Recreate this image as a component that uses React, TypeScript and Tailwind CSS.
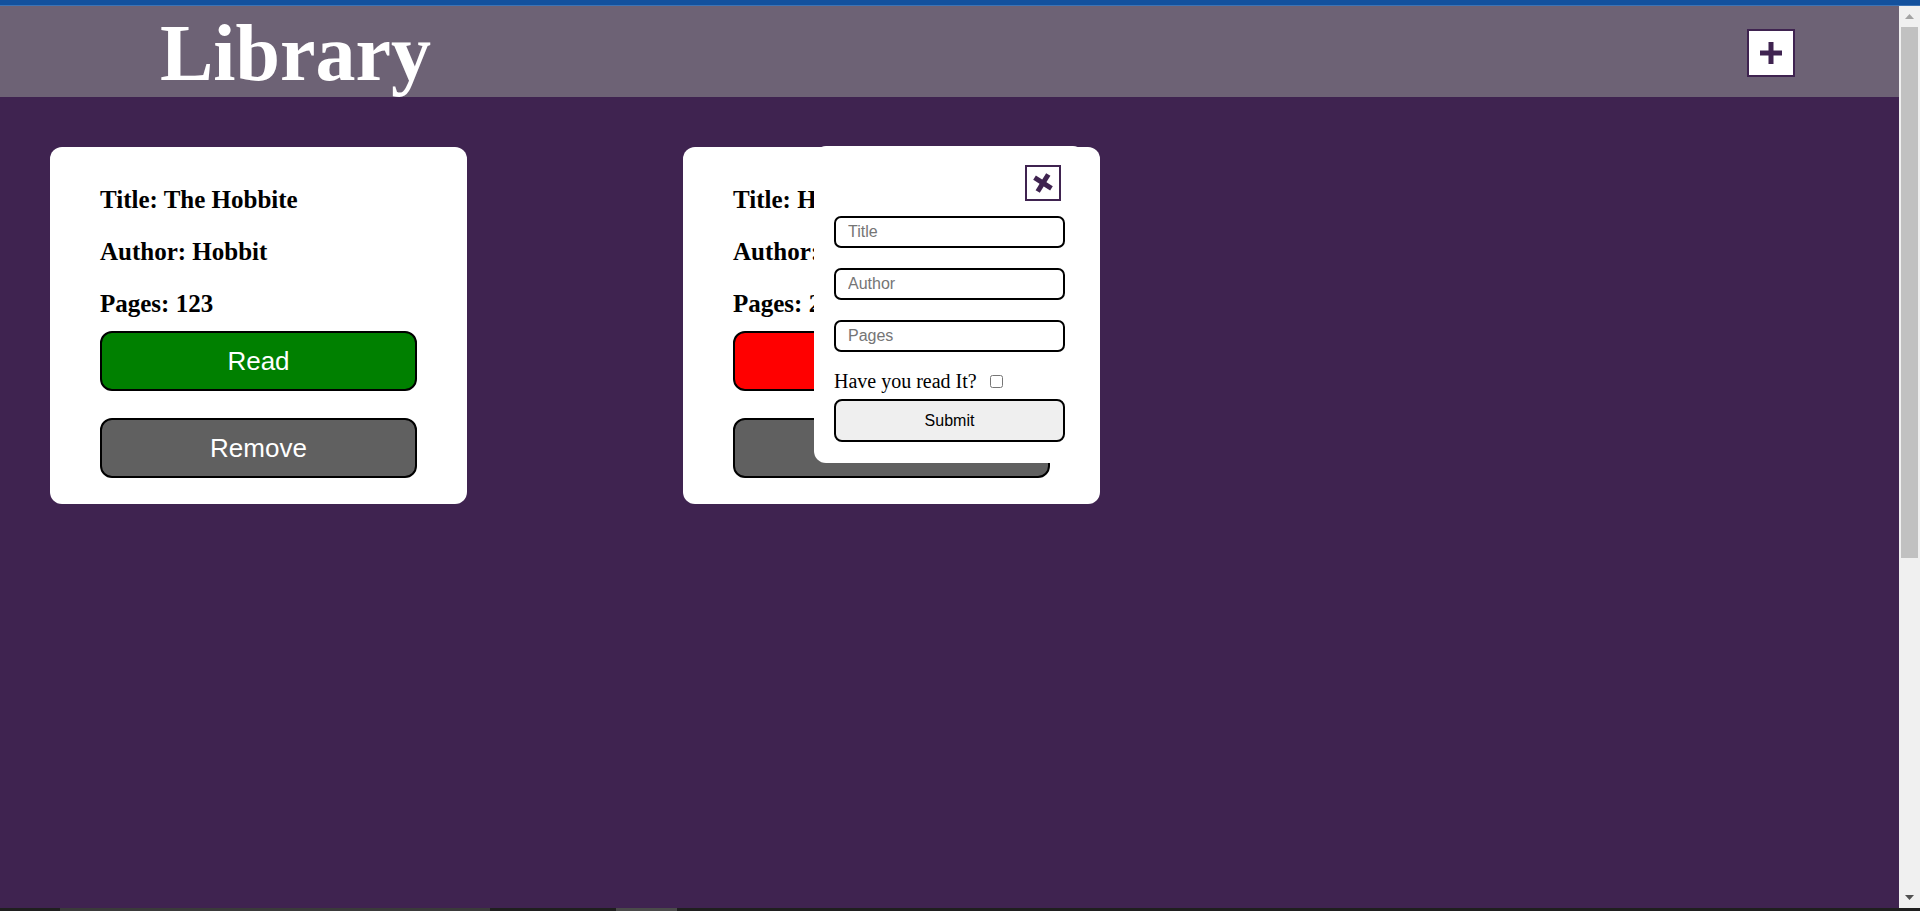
import React from "react";

const serif = { fontFamily: '"Liberation Serif", "Times New Roman", serif' };
const sans = { fontFamily: '"Liberation Sans", Arial, sans-serif' };

function Card({ title, author, pages, read }: { title: string; author: string; pages: string; read: boolean }) {
  return (
    <div className="ml-[50px] flex h-[357px] w-[417px] flex-col rounded-[12px] bg-white px-[50px] pt-[39px]">
      <div className="flex flex-col gap-[24px] text-[25px] font-bold leading-[28px] text-black" style={serif}>
        <p className="whitespace-nowrap">Title: {title}</p>
        <p className="whitespace-nowrap">Author: {author}</p>
        <p className="whitespace-nowrap">Pages: {pages}</p>
      </div>
      <button
        className={`mt-[13px] flex h-[60px] w-full items-center justify-center rounded-[12px] border-2 border-black text-[26px] text-white ${
          read ? "bg-[#008000]" : "bg-[#ff0000]"
        }`}
        style={sans}
      >
        {read ? "Read" : "Not read"}
      </button>
      <button
        className="mt-[27px] flex h-[60px] w-full items-center justify-center rounded-[12px] border-2 border-black bg-[#606060] text-[26px] text-white"
        style={sans}
      >
        Remove
      </button>
    </div>
  );
}

function Popup() {
  return (
    <div className="absolute left-[131px] top-[-1px] flex w-[271px] flex-col rounded-[12px] bg-white px-[20px] pb-[21px] pt-[19px]">
      <button className="mr-[4px] flex h-[36px] w-[36px] items-center justify-center self-end border-2 border-[#3f2350] bg-white">
        <svg width="24" height="24" viewBox="0 0 24 24">
          <g transform="rotate(32 12 12)" fill="#3f2350">
            <rect x="2" y="9.5" width="20" height="5" />
            <rect x="9.5" y="2" width="5" height="20" />
          </g>
        </svg>
      </button>
      <div className="mt-[15px] flex flex-col gap-[20px]">
        {["Title", "Author", "Pages"].map((p) => (
          <input
            key={p}
            placeholder={p}
            className="h-[32px] w-full rounded-[7px] border-2 border-black bg-white px-[12px] text-[16px] text-black outline-none placeholder:text-[#757575]"
            style={sans}
          />
        ))}
      </div>
      <div className="mt-[18px] flex h-[23px] items-center">
        <span className="text-[20px] leading-[23px] text-black" style={serif}>
          Have you read It?
        </span>
        <input type="checkbox" className="m-0 ml-[13px] h-[13px] w-[13px]" />
      </div>
      <button
        className="mt-[6px] flex h-[43px] w-full items-center justify-center rounded-[8px] border-2 border-black bg-[#efefef] text-[16px] text-black"
        style={sans}
      >
        Submit
      </button>
    </div>
  );
}

export default function App() {
  return (
    <div className="flex h-[911px] w-[1920px] flex-col overflow-hidden bg-[#1f1f1f]">
      <div className="h-[6px] border-b border-[#3c73b5] bg-[#13519d]" />
      <div className="flex flex-1">
        <div className="flex flex-1 flex-col bg-[#3f2350]">
          <header className="flex h-[91px] items-start justify-between bg-[#6d6275]">
            <h1
              className="ml-[160px] mt-[7px] text-[80px] font-bold leading-[80px] text-white"
              style={serif}
            >
              Library
            </h1>
            <button className="mr-[104px] mt-[23px] flex h-[48px] w-[48px] items-center justify-center border-2 border-[#3f2350] bg-white">
              <svg width="22" height="22" viewBox="0 0 22 22">
                <rect x="0" y="8.5" width="22" height="5" fill="#3f2350" />
                <rect x="8.5" y="0" width="5" height="22" fill="#3f2350" />
              </svg>
            </button>
          </header>
          <main className="mt-[50px] grid grid-cols-3">
            <div>
              <Card title="The Hobbite" author="Hobbit" pages="123" read={true} />
            </div>
            <div>
              <div className="relative ml-[50px] w-[417px]">
                <div className="-ml-[50px]">
                  <Card title="Hobbit" author="Hobbit" pages="234" read={false} />
                </div>
                <Popup />
              </div>
            </div>
            <div />
          </main>
        </div>
        <div className="flex w-[21px] flex-col items-center bg-[#f0f0f0]">
          <div className="flex h-[21px] w-full items-center justify-center">
            <svg width="9" height="5" viewBox="0 0 9 5">
              <polygon points="4.5,0 9,5 0,5" fill="#a3a3a3" />
            </svg>
          </div>
          <div className="h-[531px] w-[17px] bg-[#c1c1c1]" />
          <div className="flex-1" />
          <div className="flex h-[21px] w-full items-center justify-center">
            <svg width="9" height="5" viewBox="0 0 9 5">
              <polygon points="0,0 9,0 4.5,5" fill="#505050" />
            </svg>
          </div>
        </div>
      </div>
      <div className="flex h-[3px] bg-[#1f1f1f]">
        <div className="ml-[60px] w-[430px] bg-[#3a3a3a]" />
        <div className="ml-[126px] w-[61px] bg-[#4a4a4a]" />
      </div>
    </div>
  );
}
